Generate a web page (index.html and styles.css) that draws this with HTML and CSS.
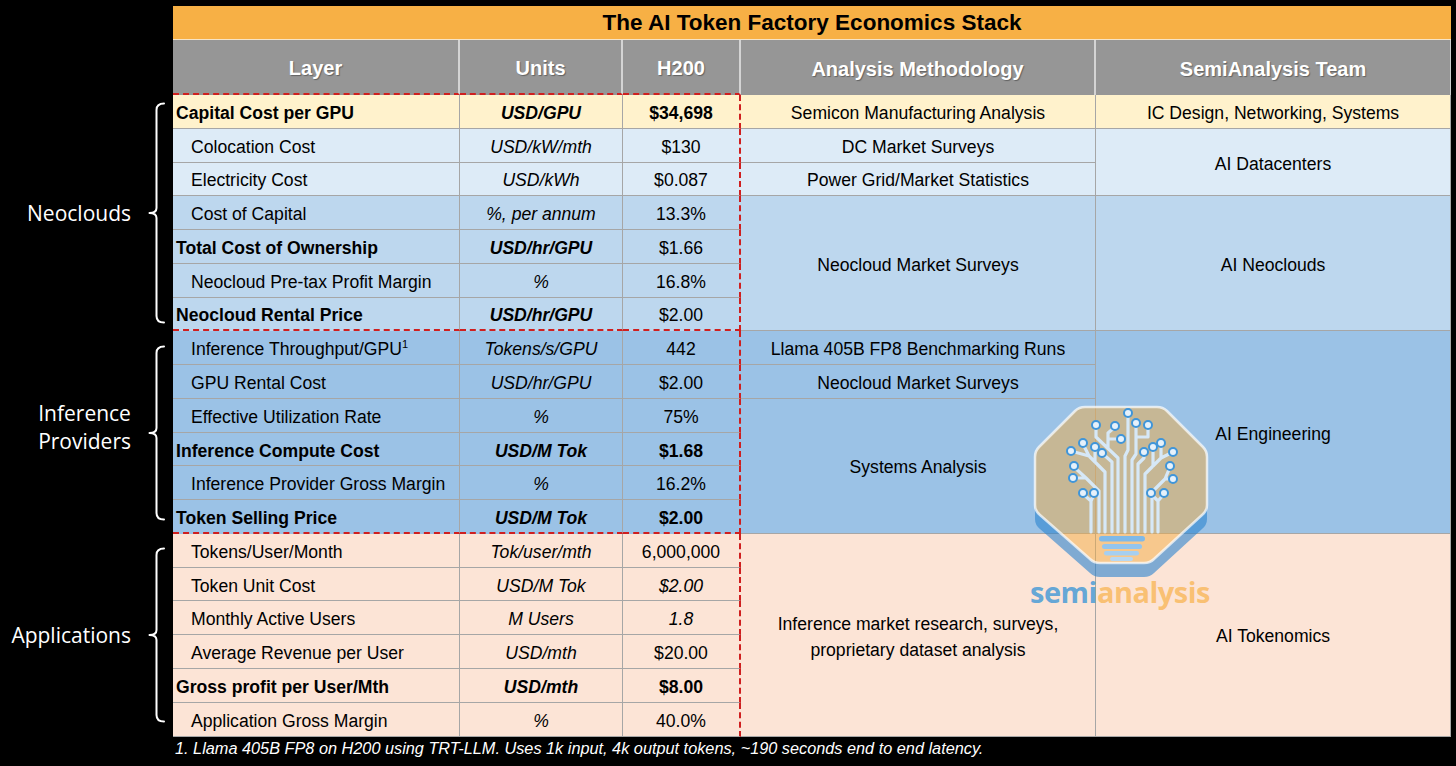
FILE: index.html
```html
<!DOCTYPE html>
<html lang="en">
<head>
<meta charset="utf-8">
<title>The AI Token Factory Economics Stack</title>
<link rel="stylesheet" href="styles.css">
</head>
<body>
<div class="page">
  <div class="side">
    <div class="side-head"></div>
    <div class="grp g7">
      <div class="lbl"><span>Neoclouds</span></div>
      <svg class="brace" width="24" height="222" viewBox="0 0 24 222"><path d="M18,1.5 Q10.5,1.5 10.5,8 V106 Q10.5,111 3.5,111 Q10.5,111 10.5,116 V214 Q10.5,220.5 18,220.5"/></svg>
    </div>
    <div class="grp g6">
      <div class="lbl lbl-up"><span>Inference<br>Providers</span></div>
      <svg class="brace" width="24" height="176" viewBox="0 0 24 176"><path d="M18,1.5 Q10.5,1.5 10.5,8 V83 Q10.5,88 3.5,88 Q10.5,88 10.5,93 V168 Q10.5,174.5 18,174.5"/></svg>
    </div>
    <div class="grp g6">
      <div class="lbl"><span>Applications</span></div>
      <svg class="brace" width="24" height="176" viewBox="0 0 24 176"><path d="M18,1.5 Q10.5,1.5 10.5,8 V83 Q10.5,88 3.5,88 Q10.5,88 10.5,93 V168 Q10.5,174.5 18,174.5"/></svg>
    </div>
  </div>

  <div class="main">
    <table class="stack">
      <colgroup>
        <col class="c-layer"><col class="c-units"><col class="c-h200"><col class="c-meth"><col class="c-team">
      </colgroup>
      <tr class="title"><td colspan="5">The AI Token Factory Economics Stack</td></tr>
      <tr class="head">
        <th class="dash">Layer</th>
        <th class="dash">Units</th>
        <th class="dash">H200</th>
        <th>Analysis Methodology</th>
        <th class="last">SemiAnalysis Team</th>
      </tr>

      <tr class="r y">
        <td class="lay bl">Capital Cost per GPU</td>
        <td class="u bi">USD/GPU</td>
        <td class="v b">$34,698</td>
        <td>Semicon Manufacturing Analysis</td>
        <td>IC Design, Networking, Systems</td>
      </tr>
      <tr class="r l">
        <td class="lay ind">Colocation Cost</td>
        <td class="u">USD/kW/mth</td>
        <td class="v">$130</td>
        <td>DC Market Surveys</td>
        <td rowspan="2">AI Datacenters</td>
      </tr>
      <tr class="r l">
        <td class="lay ind">Electricity Cost</td>
        <td class="u">USD/kWh</td>
        <td class="v">$0.087</td>
        <td>Power Grid/Market Statistics</td>
      </tr>
      <tr class="r m">
        <td class="lay ind">Cost of Capital</td>
        <td class="u">%, per annum</td>
        <td class="v">13.3%</td>
        <td rowspan="4">Neocloud Market Surveys</td>
        <td rowspan="4">AI Neoclouds</td>
      </tr>
      <tr class="r m">
        <td class="lay bl">Total Cost of Ownership</td>
        <td class="u bi">USD/hr/GPU</td>
        <td class="v">$1.66</td>
      </tr>
      <tr class="r m">
        <td class="lay ind">Neocloud Pre-tax Profit Margin</td>
        <td class="u">%</td>
        <td class="v">16.8%</td>
      </tr>
      <tr class="r m end">
        <td class="lay bl">Neocloud Rental Price</td>
        <td class="u bi">USD/hr/GPU</td>
        <td class="v">$2.00</td>
      </tr>

      <tr class="r d">
        <td class="lay ind">Inference Throughput/GPU<sup>1</sup></td>
        <td class="u">Tokens/s/GPU</td>
        <td class="v">442</td>
        <td>Llama 405B FP8 Benchmarking Runs</td>
        <td rowspan="6">AI Engineering</td>
      </tr>
      <tr class="r d">
        <td class="lay ind">GPU Rental Cost</td>
        <td class="u">USD/hr/GPU</td>
        <td class="v">$2.00</td>
        <td>Neocloud Market Surveys</td>
      </tr>
      <tr class="r d">
        <td class="lay ind">Effective Utilization Rate</td>
        <td class="u">%</td>
        <td class="v">75%</td>
        <td rowspan="4">Systems Analysis</td>
      </tr>
      <tr class="r d">
        <td class="lay bl">Inference Compute Cost</td>
        <td class="u bi">USD/M Tok</td>
        <td class="v b">$1.68</td>
      </tr>
      <tr class="r d">
        <td class="lay ind">Inference Provider Gross Margin</td>
        <td class="u">%</td>
        <td class="v">16.2%</td>
      </tr>
      <tr class="r d end">
        <td class="lay bl">Token Selling Price</td>
        <td class="u bi">USD/M Tok</td>
        <td class="v b">$2.00</td>
      </tr>

      <tr class="r p">
        <td class="lay ind">Tokens/User/Month</td>
        <td class="u">Tok/user/mth</td>
        <td class="v">6,000,000</td>
        <td rowspan="6" class="two">Inference market research, surveys,<br>proprietary dataset analysis</td>
        <td rowspan="6">AI Tokenomics</td>
      </tr>
      <tr class="r p">
        <td class="lay ind">Token Unit Cost</td>
        <td class="u">USD/M Tok</td>
        <td class="v i">$2.00</td>
      </tr>
      <tr class="r p">
        <td class="lay ind">Monthly Active Users</td>
        <td class="u">M Users</td>
        <td class="v i">1.8</td>
      </tr>
      <tr class="r p">
        <td class="lay ind">Average Revenue per User</td>
        <td class="u">USD/mth</td>
        <td class="v">$20.00</td>
      </tr>
      <tr class="r p">
        <td class="lay bl">Gross profit per User/Mth</td>
        <td class="u bi">USD/mth</td>
        <td class="v b">$8.00</td>
      </tr>
      <tr class="r p">
        <td class="lay ind">Application Gross Margin</td>
        <td class="u">%</td>
        <td class="v">40.0%</td>
      </tr>
    </table>
    <p class="note">1. Llama 405B FP8 on H200 using TRT-LLM. Uses 1k input, 4k output tokens, ~190 seconds end to end latency.</p>
  </div>

  <div class="logo">
    <svg class="logo-mark" width="190" height="180" viewBox="0 0 190 180">
      <defs>
        <path id="oct" d="M55,7 H127 Q133,7 137,11 L173,47 Q177,51 177,57 V105 Q177,111 172,115 L124,159 Q120,163 114,163 H70 Q64,163 60,159 L10,115 Q5,111 5,105 V57 Q5,51 9,47 L45,11 Q49,7 55,7 Z"/>
        <mask id="shadowMask" maskUnits="userSpaceOnUse" x="0" y="0" width="190" height="180">
          <rect width="190" height="180" fill="#fff"/>
          <use href="#oct" fill="#000"/>
        </mask>
      </defs>
      <g mask="url(#shadowMask)">
        <use href="#oct" transform="translate(0,14)" fill="#2b84cf" fill-opacity="0.6"/>
      </g>
      <use href="#oct" fill="#f2ac44" fill-opacity="0.5" stroke="#ffffff" stroke-opacity="0.7" stroke-width="2.5"/>
      <g fill="none" stroke="#d6e8f7" stroke-width="3.2" stroke-linecap="round" stroke-linejoin="round">
        <path d="M61,132 V101 L53,94 M61,101 L64,94"/>
        <path d="M69,132 V91 L56,78 H43 M56,78 L44,67"/>
        <path d="M75,132 V72 L59,56 L41,51 M59,56 L53,44 M65,62 V48"/>
        <path d="M82,132 V62 L73,54"/>
        <path d="M88,132 V58 L66,37 V26 M78,48 V33 L85,27 M78,39 H90"/>
        <path d="M95,132 V56 L98,50 V15"/>
        <path d="M102,132 V60 L106,54 V24 M106,37 H118 V26"/>
        <path d="M108,132 V64 L114,58 V53"/>
        <path d="M115,132 V74 L131,58 L143,52 M131,58 V44 M123,66 V48"/>
        <path d="M122,132 V92 L135,79 H143 M135,79 L140,67"/>
        <path d="M128,132 V101 L121,94 M128,101 L134,94"/>
      </g>
      <g fill="#e6f1fb" stroke="#3f95d9" stroke-width="2">
        <circle cx="53" cy="93" r="4"/><circle cx="64" cy="93" r="4"/>
        <circle cx="43" cy="78" r="4"/><circle cx="44" cy="66" r="4"/>
        <circle cx="41" cy="51" r="4"/><circle cx="53" cy="43" r="4"/><circle cx="65" cy="47" r="4"/>
        <circle cx="72" cy="53" r="4"/>
        <circle cx="66" cy="25" r="4"/><circle cx="85" cy="26" r="4"/><circle cx="91" cy="39" r="4"/>
        <circle cx="98" cy="13" r="4"/>
        <circle cx="106" cy="23" r="4"/><circle cx="118" cy="25" r="4"/>
        <circle cx="114" cy="52" r="4"/>
        <circle cx="143" cy="52" r="4"/><circle cx="131" cy="43" r="4"/><circle cx="123" cy="47" r="4"/>
        <circle cx="143" cy="79" r="4"/><circle cx="140" cy="66" r="4"/>
        <circle cx="121" cy="93" r="4"/><circle cx="134" cy="93" r="4"/>
      </g>
      <g>
        <rect x="69" y="136" width="46" height="5.5" rx="2.7" fill="#7fb9e8"/>
        <rect x="72" y="144" width="40" height="5" rx="2.5" fill="#94c5ed"/>
        <rect x="74" y="151" width="35" height="4.5" rx="2.2" fill="#a6cff0"/>
        <rect x="80" y="157" width="23" height="4" rx="2" fill="#b8d8f2"/>
      </g>
    </svg>
    <div class="logo-text"><span class="semi">semi</span><span class="ana">analysis</span></div>
  </div>
</div>
</body>
</html>
```

FILE: styles.css
```css
* {
  box-sizing: border-box;
}

body {
  margin: 0;
  background: #000;
  font-family: "Liberation Sans", Arial, sans-serif;
  color: #000;
}

.page {
  position: relative;
  display: flex;
  width: 1456px;
  height: 766px;
  padding-top: 6px;
  overflow: hidden;
}

/* ---------- left side labels and braces ---------- */
.side {
  flex: none;
  width: 173px;
  display: flex;
  flex-direction: column;
}

.side-head {
  height: 89px;
}

.grp {
  display: flex;
  align-items: center;
}

.g7 {
  height: 236.4px;
}

.g6 {
  height: 202.6px;
}

.lbl {
  flex: 1;
  text-align: right;
  padding-right: 15px;
  font-family: "Open Sans", "Liberation Sans", sans-serif;
  font-size: 21px;
  line-height: 28px;
  color: #fff;
}

.lbl span {
  display: inline-block;
  text-align: center;
}

.lbl-up {
  margin-top: -12px;
}

.brace {
  flex: none;
  margin-right: 3px;
}

.brace path {
  fill: none;
  stroke: #fff;
  stroke-width: 2;
  stroke-linecap: round;
  stroke-linejoin: round;
}

/* ---------- table ---------- */
.main {
  flex: none;
  width: 1278px;
}

.stack {
  width: 1278px;
  border-collapse: separate;
  border-spacing: 0;
  table-layout: fixed;
}

.c-layer { width: 287px; }
.c-units { width: 163px; }
.c-h200 { width: 118px; }
.c-meth { width: 355px; }
.c-team { width: 355px; }

.title td {
  height: 34px;
  padding: 1px 0 0;
  background: #f7b045;
  border-bottom: 1px solid #f6e4c6;
  font-size: 22.5px;
  font-weight: bold;
  text-align: center;
  line-height: 32px;
}

.head th {
  height: 55px;
  padding: 4px 0 0;
  background: #969696;
  color: #fff;
  font-size: 20px;
  font-weight: bold;
  text-align: center;
  border-right: 2px solid #d4d4d4;
  text-shadow: 1px 1px 1px rgba(0, 0, 0, 0.35);
}

.head th.last {
  border-right: 1px solid #cfcfcf;
}

.head th.dash {
  border-bottom: 2px dashed #cf1f1f;
}

.r {
  height: 33.77px;
}

.r td {
  padding: 4px 0 0;
  font-size: 17.6px;
  text-align: center;
  white-space: nowrap;
  border-right: 1px solid #a6a6a6;
  border-bottom: 1px solid #a6a6a6;
}

.r td.v {
  border-right: 2px dashed #cf1f1f;
}

.end td.lay,
.end td.u,
.end td.v {
  border-bottom: 2px dashed #cf1f1f;
}

.y td { background: #fff2cc; }
.l td { background: #ddebf7; }
.m td { background: #bdd7ee; }
.d td { background: #9bc2e6; }
.p td { background: #fce4d6; }

.r td.lay {
  text-align: left;
}

.r td.ind {
  padding-left: 18px;
}

.r td.bl {
  padding-left: 3px;
  font-weight: bold;
}

.u {
  font-style: italic;
}

.bi {
  font-weight: bold;
  font-style: italic;
}

.b {
  font-weight: bold;
}

.i {
  font-style: italic;
}

.two {
  line-height: 26px;
}

sup {
  font-size: 11px;
  line-height: 0;
  vertical-align: 7px;
}

.note {
  margin: 2px 0 0 2px;
  font-size: 16.3px;
  line-height: 18px;
  font-style: italic;
  color: #fff;
}

/* ---------- watermark logo ---------- */
.logo {
  position: absolute;
  left: 1030px;
  top: 400px;
  width: 200px;
}

.logo-mark {
  display: block;
}

.logo-text {
  margin-top: -3px;
  font-family: "Open Sans", "Liberation Sans", sans-serif;
  font-weight: 700;
  font-size: 29px;
  line-height: 30px;
  letter-spacing: -0.5px;
}

.semi {
  color: rgba(60, 150, 215, 0.8);
}

.ana {
  color: rgba(248, 176, 70, 0.7);
}
```
